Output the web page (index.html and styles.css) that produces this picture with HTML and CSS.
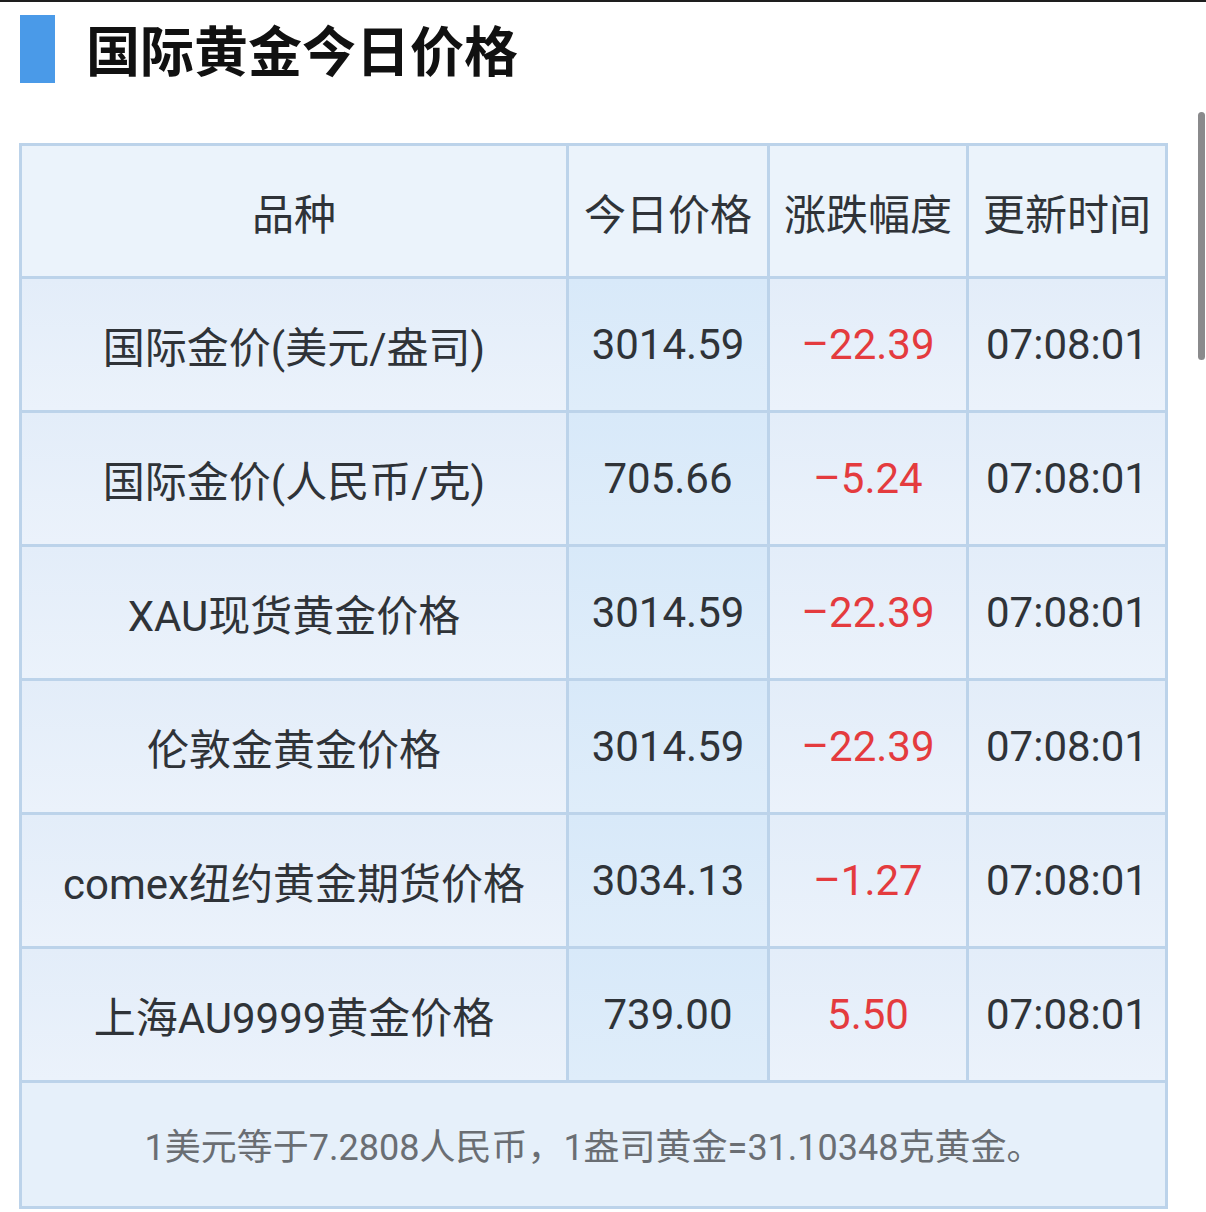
FILE: index.html
```html
<!DOCTYPE html>
<html lang="zh-CN">
<head>
<meta charset="utf-8">
<title>国际黄金今日价格</title>
<link rel="stylesheet" href="styles.css">
</head>
<body>
<div class="page">
  <div class="topline"></div>
  <h1 class="title"><span class="title-bar"></span><span class="title-text">国际黄金今日价格</span></h1>
  <div class="grid">
    <div class="cell head">品种</div>
    <div class="cell head">今日价格</div>
    <div class="cell head">涨跌幅度</div>
    <div class="cell head">更新时间</div>

    <div class="cell">国际金价(美元/盎司)</div>
    <div class="cell price">3014.59</div>
    <div class="cell red">–22.39</div>
    <div class="cell">07:08:01</div>

    <div class="cell">国际金价(人民币/克)</div>
    <div class="cell price">705.66</div>
    <div class="cell red">–5.24</div>
    <div class="cell">07:08:01</div>

    <div class="cell">XAU现货黄金价格</div>
    <div class="cell price">3014.59</div>
    <div class="cell red">–22.39</div>
    <div class="cell">07:08:01</div>

    <div class="cell">伦敦金黄金价格</div>
    <div class="cell price">3014.59</div>
    <div class="cell red">–22.39</div>
    <div class="cell">07:08:01</div>

    <div class="cell">comex纽约黄金期货价格</div>
    <div class="cell price">3034.13</div>
    <div class="cell red">–1.27</div>
    <div class="cell">07:08:01</div>

    <div class="cell">上海AU9999黄金价格</div>
    <div class="cell price">739.00</div>
    <div class="cell red">5.50</div>
    <div class="cell">07:08:01</div>

    <div class="cell note">1美元等于7.2808人民币，1盎司黄金=31.10348克黄金。</div>
  </div>
  <div class="scrollbar"></div>
</div>
</body>
</html>
```
FILE: styles.css
```css
html, body {
  margin: 0;
  padding: 0;
  background: #ffffff;
}
body {
  font-family: Roboto, "Noto Sans CJK SC", sans-serif;
  color: #2f3338;
  width: 1206px;
  height: 1212px;
  overflow: hidden;
}
.page {
  position: relative;
  height: 1212px;
}
.topline {
  height: 2px;
  background: #1e1e1e;
}
.title {
  display: flex;
  align-items: center;
  gap: 31px;
  margin: 13px 0 0 0;
  padding-left: 20px;
  height: 68px;
  font-family: "Noto Sans CJK SC", sans-serif;
  font-weight: 700;
  font-size: 54px;
  line-height: 68px;
  color: #111111;
}
.title-bar {
  width: 35px;
  height: 68px;
  background: #4a9ae8;
  flex: none;
}
.grid {
  display: grid;
  grid-template-columns: 547px 201px 199px 199px;
  grid-template-rows: 133px repeat(6, 134px) 126px;
  width: 1146px;
  margin: 60px 0 0 19px;
  border-left: 3px solid #bcd3ea;
  border-top: 3px solid #bcd3ea;
}
.cell {
  box-sizing: border-box;
  border-right: 3px solid #bcd3ea;
  border-bottom: 3px solid #bcd3ea;
  display: flex;
  align-items: center;
  justify-content: center;
  font-size: 42px;
  white-space: nowrap;
  background: linear-gradient(#e3edf9, #ebf2fb);
}
.cell.head {
  background: #ebf3fb;
}
.cell.price {
  background: linear-gradient(#d8e9f9, #dfedfa);
}
.cell.red {
  color: #e43b3e;
}
.cell.note {
  grid-column: 1 / 5;
  font-size: 36px;
  color: #6a6e73;
  background: #e6f0fa;
  padding-bottom: 2px;
}
.scrollbar {
  position: absolute;
  top: 112px;
  right: 1px;
  width: 7px;
  height: 248px;
  border-radius: 4px;
  background: #8a8a8c;
}
```
